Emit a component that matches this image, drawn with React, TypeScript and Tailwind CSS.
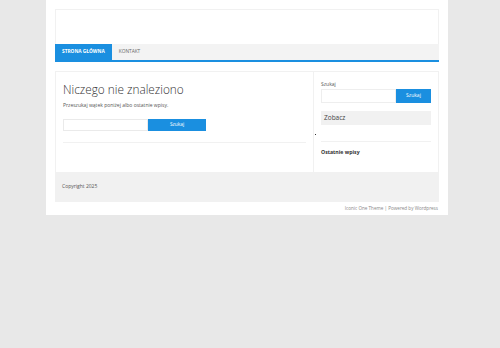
import React from 'react';

const font = { fontFamily: '"Open Sans", "Noto Sans", sans-serif' };

export default function App() {
  return (
    <div className="h-[348px] w-[500px] bg-[#e8e8e8]" style={font}>
      <div className="ml-[46px] w-[402px] bg-white px-[9px] pt-[9px]">
        <header className="h-[35px] border border-b-0 border-[#f1f1f1]" />

        <nav className="flex h-[18px] border-b-2 border-[#1a8fe0] bg-[#f3f3f3] text-[4.8px] uppercase">
          <a className="flex items-center bg-[#1a8fe0] px-[7px] font-bold text-white">Strona główna</a>
          <a className="flex items-center px-[7px] text-[#666]">Kontakt</a>
        </nav>

        <div className="mt-[9px] flex border border-[#f1f1f1]">
          <main className="w-[258px] border-r border-[#f1f1f1] px-[7px] pt-[10px]">
            <h1 className="text-[11.8px] leading-[14px] font-light text-[#333]">Niczego nie znaleziono</h1>
            <p className="mt-[6px] text-[5px] text-[#555]">Przeszukaj wątek poniżej albo ostatnie wpisy.</p>
            <div className="mt-[9px] flex">
              <div className="h-[12px] w-[85px] border border-[#eaeaea]" />
              <button className="h-[12px] w-[58px] bg-[#1a8fe0] text-[4.8px] text-white">Szukaj</button>
            </div>
            <div className="mt-[11px] mb-[29px] border-t border-[#f1f1f1]" />
          </main>

          <aside className="flex-1 px-[7px] pt-[9px] text-[5px] text-[#555]">
            <div>Szukaj</div>
            <div className="flex">
              <div className="h-[14px] flex-1 border border-[#eeeeee]" />
              <button className="h-[14px] w-[35px] bg-[#1a8fe0] text-white">Szukaj</button>
            </div>
            <div className="mt-[8px] flex h-[14px] items-center bg-[#f1f1f1] px-[3px] text-[6.5px] text-[#444]">
              Zobacz
            </div>
            <div className="relative mt-[16px] border-t border-[#f1f1f1]">
              <span className="absolute -top-[8px] -left-[6px] h-[1px] w-[1px] bg-[#333]" />
            </div>
            <div className="mt-[7px] text-[5.2px] font-bold text-[#333]">Ostatnie wpisy</div>
          </aside>
        </div>

        <footer className="flex h-[29px] items-center bg-[#f1f1f1] px-[7px] text-[5px] text-[#555]">
          Copyright 2025
        </footer>
        <div className="flex h-[13px] items-center justify-end pr-[1px] text-[4.6px] text-[#888]">
          Iconic One Theme | Powered by Wordpress
        </div>
      </div>
    </div>
  );
}
